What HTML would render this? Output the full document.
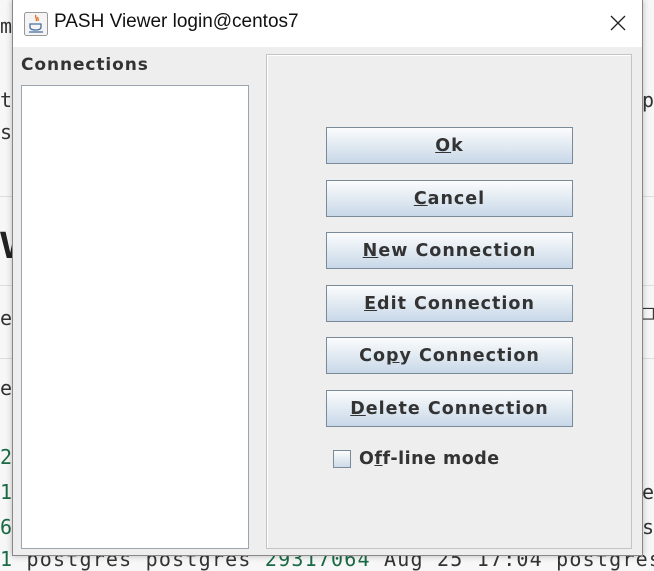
<!DOCTYPE html>
<html><head><style>
body{margin:0;width:654px;height:568px;overflow:hidden;background:#f7f7f7;position:relative;font-family:"DejaVu Sans","Liberation Sans",sans-serif}
.bg{position:absolute;font-family:"DejaVu Sans Mono","Liberation Mono",monospace;font-size:20px;letter-spacing:1.2px;color:#333;white-space:nowrap}
.g{color:#1a6b45}
.hr{position:absolute;left:0;width:654px;height:1px;background:#ddd}
.win{position:absolute;left:12px;top:0;width:629px;height:555px;background:#eeeeee;border:1px solid #888;border-top:none;box-shadow:0 0 6px rgba(0,0,0,.25)}
.title{position:absolute;left:0;top:0;width:629px;height:47px;background:#fff}
.title span{position:absolute;left:41px;top:11px;font-family:"Liberation Sans",sans-serif;font-size:19px;color:#111}
.lbl{position:absolute;left:8px;top:55px;font-size:17px;letter-spacing:0.9px;font-weight:bold;color:#333}
.list{position:absolute;left:8px;top:85px;width:226px;height:462px;background:#fff;border:1px solid #9aa5b0}
.panel{position:absolute;left:253px;top:54px;width:364px;height:493px;border:1px solid #c4c4c4;box-shadow:inset 1px 1px 0 #fff}
.btn{position:absolute;left:313px;width:245px;height:35px;border:1px solid #7a8a99;background:linear-gradient(#fbfcfd,#dfe8f1 55%,#c8d8e8);text-align:center;line-height:37px;font-size:17.5px;letter-spacing:1px;font-weight:bold;color:#333}
.btn u{text-decoration:underline}
</style></head><body>
<div class="bg" style="left:0;top:14px">m</div>
<div class="bg" style="left:0;top:88px">t</div>
<div class="bg" style="left:642px;top:88px">po</div>
<div class="bg" style="left:0;top:120px">s</div>
<div class="hr" style="top:196px"></div>
<div class="bg" style="left:0;top:225px;font-family:'Liberation Sans';font-weight:bold;font-size:38px;color:#222">W</div>
<div class="hr" style="top:285px"></div>
<div class="bg" style="left:0;top:306px">e</div>
<div class="bg" style="left:642px;top:300px">□</div>
<div class="hr" style="top:358px"></div>
<div class="bg" style="left:0;top:376px">e</div>
<div class="bg g" style="left:0;top:445px">2</div>
<div class="bg g" style="left:0;top:480px">1</div>
<div class="bg" style="left:642px;top:480px">ew</div>
<div class="bg g" style="left:0;top:515px">6</div>
<div class="bg" style="left:642px;top:515px">sc</div>
<div class="bg" style="left:0;top:547px"><span class="g">1</span> postgres postgres <span class="g">29317064</span> Aug 25 17:04 postgresc</div>
<div class="win">
<div class="title">
<svg style="position:absolute;left:11px;top:12px" width="24" height="24" viewBox="0 0 24 24"><rect x="0.5" y="0.5" width="23" height="23" rx="2" fill="#f4f4f4" stroke="#999"/><path d="M12 3c-2 2 2 3 0 6M14 5c-1 1 1 2 0 4" stroke="#e07020" fill="none" stroke-width="1.3"/><path d="M6 12h11v3c0 2-2 3-5.5 3S6 17 6 15z" fill="none" stroke="#4a6fa0" stroke-width="1.3"/><path d="M5 20h14" stroke="#4a6fa0" stroke-width="1.3"/></svg>
<span>PASH Viewer login@centos7</span>
<svg style="position:absolute;left:597px;top:15px" width="16" height="16"><path d="M1 1L15 15M15 1L1 15" stroke="#222" stroke-width="1.3"/></svg>
</div>
<div class="lbl">Connections</div>
<div class="list"></div>
<div class="panel"></div>
<div class="btn" style="top:127px"><u>O</u>k</div>
<div class="btn" style="top:180px"><u>C</u>ancel</div>
<div class="btn" style="top:232px"><u>N</u>ew Connection</div>
<div class="btn" style="top:285px"><u>E</u>dit Connection</div>
<div class="btn" style="top:337px">Co<u>p</u>y Connection</div>
<div class="btn" style="top:390px"><u>D</u>elete Connection</div>
<div style="position:absolute;left:320px;top:450px;width:16px;height:16px;border:1px solid #7a8a99;background:linear-gradient(#fbfcfd,#cddbe9)"></div>
<div style="position:absolute;left:346px;top:449px;font-size:17.5px;letter-spacing:0.5px;font-weight:bold;color:#333">O<u>f</u>f-line mode</div>
</div>
</body></html>
